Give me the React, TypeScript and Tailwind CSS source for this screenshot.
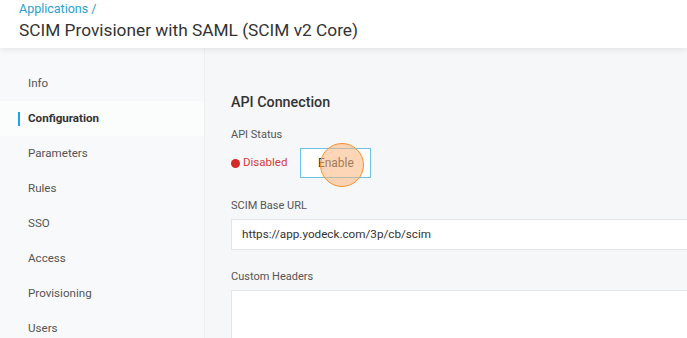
import { useState } from 'react';

const navItems = ['Info', 'Configuration', 'Parameters', 'Rules', 'SSO', 'Access', 'Provisioning', 'Users'];

export default function App() {
  const [active] = useState('Configuration');

  return (
    <div className="h-[338px] w-[687px] overflow-hidden bg-[#f7f8f9] font-['Roboto',sans-serif] text-[#333]">
      {/* Header */}
      <div className="relative z-10 h-[48px] bg-white px-[19px] pt-[1px] shadow-[0_2px_6px_rgba(0,0,0,0.08)]">
        <div className="text-[12.5px] leading-[16px] text-[#2a9fd0]">Applications /</div>
        <h1 className="mt-[1px] text-[17.3px] leading-[24px] text-[#333]">SCIM Provisioner with SAML (SCIM v2 Core)</h1>
      </div>

      <div className="flex h-[290px]">
        {/* Sidebar */}
        <div className="w-[205px] shrink-0 border-r border-[#eceef0] bg-[#f8f9fa] pt-[18px]">
          {navItems.map((item) => {
            const isActive = item === active;
            return (
              <div
                key={item}
                className={`flex h-[35px] items-center pl-[18px] text-[11.6px] ${
                  isActive ? 'bg-[#fbfcfc] font-bold text-[#333]' : 'text-[#555]'
                }`}
              >
                <span className={`mr-[8px] h-[14px] w-[2px] ${isActive ? 'bg-[#1aa7e0]' : 'bg-transparent'}`} />
                {item}
              </div>
            );
          })}
        </div>

        {/* Main */}
        <div className="min-w-0 flex-1 bg-[#f6f7f8] pl-[26px] pt-[44px]">
          <h2 className="text-[14.3px] font-medium leading-[20px] text-[#333]">API Connection</h2>
          <div className="mt-[16px] text-[11px] leading-[14px] text-[#555]">API Status</div>
          <div className="mt-[6px] flex items-center">
            <span className="h-[9px] w-[9px] rounded-full bg-[#d42a2a]" />
            <span className="ml-[3px] text-[11.5px] text-[#d43a3a]">Disabled</span>
            <div className="relative ml-[13px]">
              <button className="h-[30px] w-[71px] border border-[#6cc3e2] bg-white text-[12px] text-[#333]">
                Enable
              </button>
              <span className="absolute left-[20px] top-[-5px] h-[44px] w-[44px] rounded-full border-[1.5px] border-[#f5922f] bg-[#f9b47a]/55" />
            </div>
          </div>

          <div className="mt-[21px] text-[11px] leading-[14px] text-[#555]">SCIM Base URL</div>
          <div className="mt-[6px] flex h-[31px] w-[470px] items-center border border-[#e3e5e7] bg-white pl-[10px] text-[11.7px] text-[#333]">
            https://app.yodeck.com/3p/cb/scim
          </div>

          <div className="mt-[20px] text-[11px] leading-[14px] text-[#555]">Custom Headers</div>
          <div className="mt-[6px] h-[60px] w-[470px] border border-[#e3e5e7] bg-white" />
        </div>
      </div>
    </div>
  );
}
